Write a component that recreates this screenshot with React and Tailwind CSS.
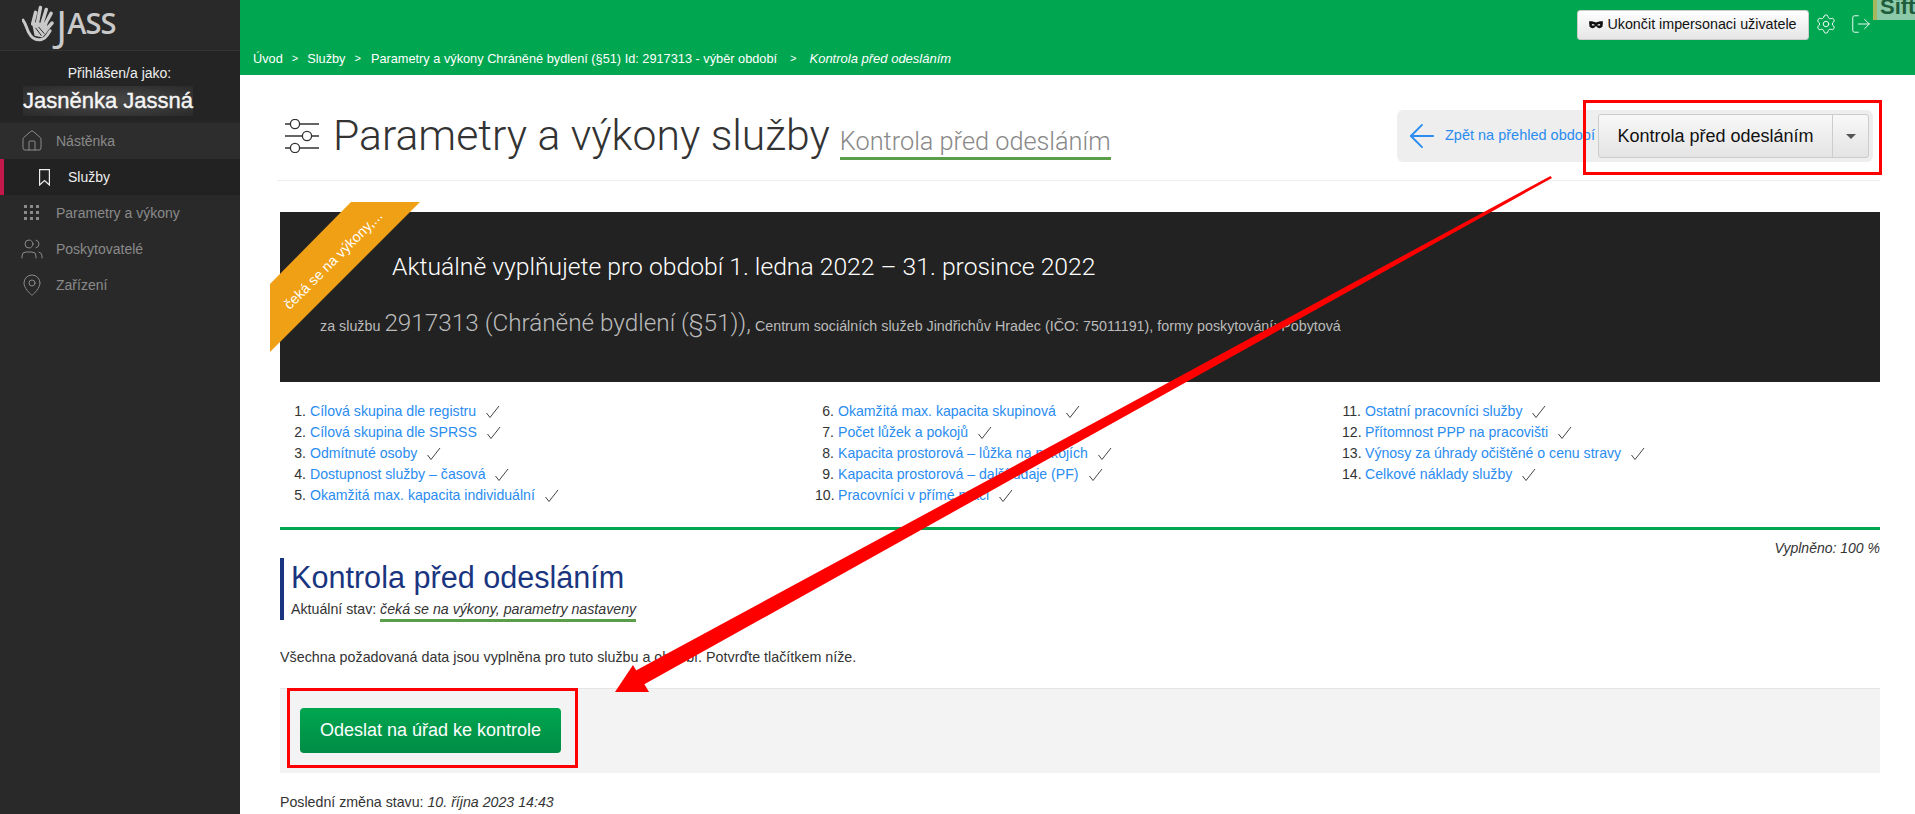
import { ArrowLeft, House, LogOut, MapPin, Settings, Users } from 'lucide-react';

function BookmarkIcon({ className }) {
  return (
    <svg width="11" height="17" viewBox="0 0 11 17" fill="none" stroke="currentColor" strokeWidth="1.2" className={className}>
      <path d="M0.6 0.6 H10.4 V16 L5.5 11.5 L0.6 16 Z" />
    </svg>
  );
}

function GridIcon({ className }) {
  const cells = [0, 6, 12];
  return (
    <svg width="24" height="24" viewBox="0 0 24 24" fill="currentColor" className={className}>
      {cells.map((y) => cells.map((x) => <rect key={`${x}-${y}`} x={4 + x} y={4 + y} width="3" height="3" />))}
    </svg>
  );
}

const navItems = [
  { label: 'Nástěnka', icon: House, light: true },
  { label: 'Služby', icon: BookmarkIcon, active: true },
  { label: 'Parametry a výkony', icon: GridIcon },
  { label: 'Poskytovatelé', icon: Users },
  { label: 'Zařízení', icon: MapPin },
];

const columns = [
  [
    [1, 'Cílová skupina dle registru'],
    [2, 'Cílová skupina dle SPRSS'],
    [3, 'Odmítnuté osoby'],
    [4, 'Dostupnost služby – časová'],
    [5, 'Okamžitá max. kapacita individuální'],
  ],
  [
    [6, 'Okamžitá max. kapacita skupinová'],
    [7, 'Počet lůžek a pokojů'],
    [8, 'Kapacita prostorová – lůžka na pokojích'],
    [9, 'Kapacita prostorová – další údaje (PF)'],
    [10, 'Pracovníci v přímé práci'],
  ],
  [
    [11, 'Ostatní pracovníci služby'],
    [12, 'Přítomnost PPP na pracovišti'],
    [13, 'Výnosy za úhrady očištěné o cenu stravy'],
    [14, 'Celkové náklady služby'],
  ],
];

function Check() {
  return (
    <svg width="16" height="14" viewBox="0 0 16 14" fill="none" stroke="#444" strokeWidth="1" className="ml-[9px] shrink-0">
      <path d="M1.5 8 L5 12.5 L14 1" />
    </svg>
  );
}

function Logo() {
  return (
    <div className="flex items-start pl-[22px] pt-[5px] h-[51px] border-b border-[#333]">
      <svg width="33" height="37" viewBox="0 0 34 37" fill="none" className="shrink-0">
        <path d="M1 15 C4 19 5 24 7 28 C10 34 15 36 20 35 C25 34 27 29 29 26" stroke="#c9c9c9" strokeWidth="3" strokeLinecap="round" />
        <path d="M11 19 L14 7 M16 17 L19 2 M21 17 L25 4 M24 19 L30 8 M24 26 L31 18" stroke="#c9c9c9" strokeWidth="3.6" strokeLinecap="round" />
        <path d="M10 17 L26 18 L26 27 L21 33 L13 31 Z" fill="#c9c9c9" />
        <path d="M14 23 L20 31 M17 22 L23 29" stroke="#292929" strokeWidth="1" />
      </svg>
      <span className="flex items-end text-[#c9c9c9] font-['Open_Sans',sans-serif] font-semibold ml-[1px]">
        <span className="text-[42px] leading-[46px] -mt-[5px] font-normal">J</span>
        <span className="text-[29px] leading-[36px] tracking-[-1px] pb-[7px]">ASS</span>
      </span>
    </div>
  );
}

function Sidebar() {
  return (
    <aside className="w-[240px] shrink-0 bg-[#292929] h-full">
      <Logo />
      <div className="h-[71px] bg-[#242424] flex flex-col text-white">
        <p className="text-[14px] leading-[16px] mt-[14px] text-[#eee] text-center pl-[1px] pr-[2px]">Přihlášen/a jako:</p>
        <p className="w-[170px] ml-[23px] text-[22px] leading-[30px] mt-[5px] text-[#f5f5f5] whitespace-nowrap bg-[radial-gradient(ellipse_at_center,#4a4a4a,#2a2a2a)] [-webkit-text-stroke:0.4px_#f5f5f5]">Jasněnka Jassná</p>
      </div>
      <nav className="pt-px">
        {navItems.map(({ label, icon: Icon, active, light }) => (
          <div
            key={label}
            className={`h-[36px] flex items-center text-[14px] ${active ? 'bg-[#222] text-[#eee] border-l-4 border-[#c4174a] pl-[35px]' : 'text-[#8a8a8a] pl-[20px]'} ${light ? 'bg-[#2d2d2d]' : ''}`}
          >
            {active ? (
              <Icon className="shrink-0 mr-[18px]" />
            ) : (
              <Icon size={24} strokeWidth={1} className="shrink-0 mr-[12px]" />
            )}
            {label}
          </div>
        ))}
      </nav>
    </aside>
  );
}

function TopBar() {
  return (
    <header className="h-[75px] bg-[#00a650] text-white shrink-0">
      <div className="h-[46px] flex items-start justify-end pt-[10px]">
        <button className="h-[30px] w-[232px] rounded-[3px] border border-[#ccc] bg-gradient-to-b from-white to-[#e6e6e6] text-[#111] text-[14.3px] flex items-center justify-center gap-[4px]">
          <svg width="14" height="8" viewBox="0 0 14 8" fill="#111">
            <path d="M0 0.5 C3 0 5 1 7 1.6 C9 1 11 0 14 0.5 L13.5 5.5 C11 8.5 8.5 7 7 5 C5.5 7 3 8.5 0.5 5.5 Z M3 3 L2.8 4.5 L5.5 4.5 L5.5 3.5 Z M11 3 L8.5 3.5 L8.5 4.5 L11.2 4.5 Z" fillRule="evenodd" />
          </svg>
          Ukončit impersonaci uživatele
        </button>
        <Settings size={22} strokeWidth={1} className="ml-[6px] mt-[3px]" />
        <LogOut size={22} strokeWidth={1} className="ml-[13px] mr-[43px] mt-[3px]" />
      </div>
      <div className="h-[25px] flex items-center pl-[13px] text-[12.75px]">
        <span>Úvod</span>
        <span className="mx-[9px] text-[11px]">&gt;</span>
        <span>Služby</span>
        <span className="mx-[9px] text-[11px]">&gt;</span>
        <span className="ml-[1px]">Parametry a výkony Chráněné bydlení (§51) Id: 2917313 - výběr období</span>
        <span className="mx-[13px] text-[11px]">&gt;</span>
        <span className="italic text-[13px]">Kontrola před odesláním</span>
      </div>
    </header>
  );
}

function PageHeader() {
  return (
    <div className="h-[106px] ml-[37px] mr-[35px] border-b border-[#eee] flex items-start">
      <svg width="35" height="34" viewBox="0 0 35 34" fill="none" stroke="#333" strokeWidth="1.3" className="ml-[8px] mt-[44px] shrink-0">
        <path d="M0 5 H5 M15 5 H34 M0 17 H17 M27 17 H34 M0 29 H5 M15 29 H34" />
        <circle cx="10" cy="5" r="4.6" />
        <circle cx="22" cy="17" r="4.6" />
        <circle cx="10" cy="29" r="4.6" />
      </svg>
      <h1 className="font-['Roboto',sans-serif] font-light text-[42.7px] leading-[50px] text-[#333] ml-[13px] mt-[35px] whitespace-nowrap">Parametry a výkony služby</h1>
      <span className="font-['Roboto',sans-serif] font-light text-[25.3px] leading-[29px] text-[#888] ml-[10px] mt-[52px] h-[33px] border-b-[3px] border-[#5a9e4a] whitespace-nowrap">Kontrola před odesláním</span>
      <div className="ml-auto mt-[35px] mr-[7px] h-[52px] w-[476px] shrink-0 bg-[#eee] rounded-[6px] flex items-center pl-[6px] pr-[4px]">
        <ArrowLeft size={38} strokeWidth={1.2} className="text-[#2a8cf0] shrink-0" />
        <span className="ml-[4px] text-[14.5px] text-[#2a8cf0] whitespace-nowrap">Zpět na přehled období</span>
        <div className="ml-auto h-[44px] w-[271px] shrink-0 flex rounded-[3px] border border-[#ccc] bg-gradient-to-b from-[#f8f8f8] to-[#e4e4e4]">
          <span className="flex-1 flex items-center justify-center text-[18px] text-[#111] border-r border-[#ccc]">Kontrola před odesláním</span>
          <span className="w-[35px] flex items-center justify-center">
            <span className="w-0 h-0 border-x-[5px] border-x-transparent border-t-[5px] border-t-[#555]" />
          </span>
        </div>
      </div>
    </div>
  );
}

function Banner() {
  return (
    <div className="relative mt-[31px] h-[170px] bg-[#222] text-white">
      <p className="font-['Roboto',sans-serif] font-light text-[24.7px] leading-[28px] pl-[112px] pt-[41px]">Aktuálně vyplňujete pro období 1. ledna 2022 – 31. prosince 2022</p>
      <p className="pl-[40px] mt-[24px] text-[14.3px] text-[#bbb] whitespace-nowrap">
        za službu <span className="text-[24.3px] font-['Roboto',sans-serif] font-light">2917313 (Chráněné bydlení (§51)),</span> Centrum sociálních služeb Jindřichův Hradec (IČO: 75011191), formy poskytování: Pobytová
      </p>
      <svg width="150" height="150" viewBox="0 0 150 150" className="absolute left-[-10px] top-[-10px]">
        <polygon points="81,0 150,0 0,150 0,82" fill="#f0a014" />
      </svg>
      <span className="absolute left-[-17px] top-[40px] w-[140px] text-center text-[14.3px] leading-[16px] text-[#fff] -rotate-45 whitespace-nowrap">čeká se na výkony,...</span>
    </div>
  );
}

function Checklist() {
  return (
    <div className="grid grid-cols-[528px_527px_1fr] mt-[19px] pl-[7px] h-[129px] border-b-[3px] border-[#00a650] text-[14.1px] leading-[21px] text-[#333]">
      {columns.map((col, i) => (
        <ol key={i}>
          {col.map(([n, label]) => (
            <li key={n} className="flex items-center h-[21px]">
              <span className="w-[19px] text-right mr-[4px] shrink-0">{n}.</span>
              <a className="text-[#2a8cf0] whitespace-nowrap">{label}</a>
              <Check />
            </li>
          ))}
        </ol>
      ))}
    </div>
  );
}

export default function App() {
  return (
    <div className="relative flex w-[1915px] h-[814px] overflow-hidden bg-white font-['Liberation_Sans',Arial,sans-serif] text-[#333]">
      <Sidebar />
      <main className="flex-1 flex flex-col min-w-0">
        <TopBar />
        <PageHeader />
        <section className="pl-[40px] pr-[35px]">
          <Banner />
          <Checklist />
          <p className="text-right text-[14px] leading-[18px] italic mt-[9px]">Vyplněno: 100 %</p>
          <div className="mt-[1px] h-[62px] border-l-[4px] border-[#1a3580] pl-[7px]">
            <h2 className="text-[30.6px] leading-[38px] mt-[1px] text-[#1a3580]">Kontrola před odesláním</h2>
            <p className="text-[14.2px] leading-[16px] mt-[5px]">
              Aktuální stav: <em className="border-b-[3px] border-[#5a9e4a] pb-[2px]">čeká se na výkony, parametry nastaveny</em>
            </p>
          </div>
          <p className="text-[14.3px] leading-[18px] mt-[28px]">Všechna požadovaná data jsou vyplněna pro tuto službu a období. Potvrďte tlačítkem níže.</p>
          <div className="mt-[22px] h-[85px] bg-[#f3f3f3] border-t border-[#e5e5e5] pl-[20px] pt-[19px]">
            <button className="w-[261px] h-[45px] rounded-[4px] bg-gradient-to-b from-[#00a650] to-[#008c45] text-white text-[18px]">Odeslat na úřad ke kontrole</button>
          </div>
          <p className="text-[14.2px] leading-[18px] mt-[20px]">Poslední změna stavu: <em>10. října 2023 14:43</em></p>
        </section>
      </main>

      <div className="absolute right-0 top-0 w-[42px] h-[20px] bg-[#8cc9a8] border-l-[4px] border-[#a5b860] overflow-hidden text-[#1f5c3c] font-bold text-[22px] leading-[14px] pl-[3px]">Sift</div>

      {/* red annotations drawn over the page */}
      <svg width="1915" height="814" viewBox="0 0 1915 814" className="absolute left-0 top-0 pointer-events-none">
        <rect x="1584.5" y="101.5" width="296" height="72" fill="none" stroke="#f00" strokeWidth="3" />
        <rect x="288.5" y="689.5" width="288" height="77" fill="none" stroke="#f00" strokeWidth="3" />
        <polygon points="1550.5,176 1552,178 643,685 635,671" fill="#f00" />
        <polygon points="615,692 633,665 649,692" fill="#f00" />
      </svg>
    </div>
  );
}
